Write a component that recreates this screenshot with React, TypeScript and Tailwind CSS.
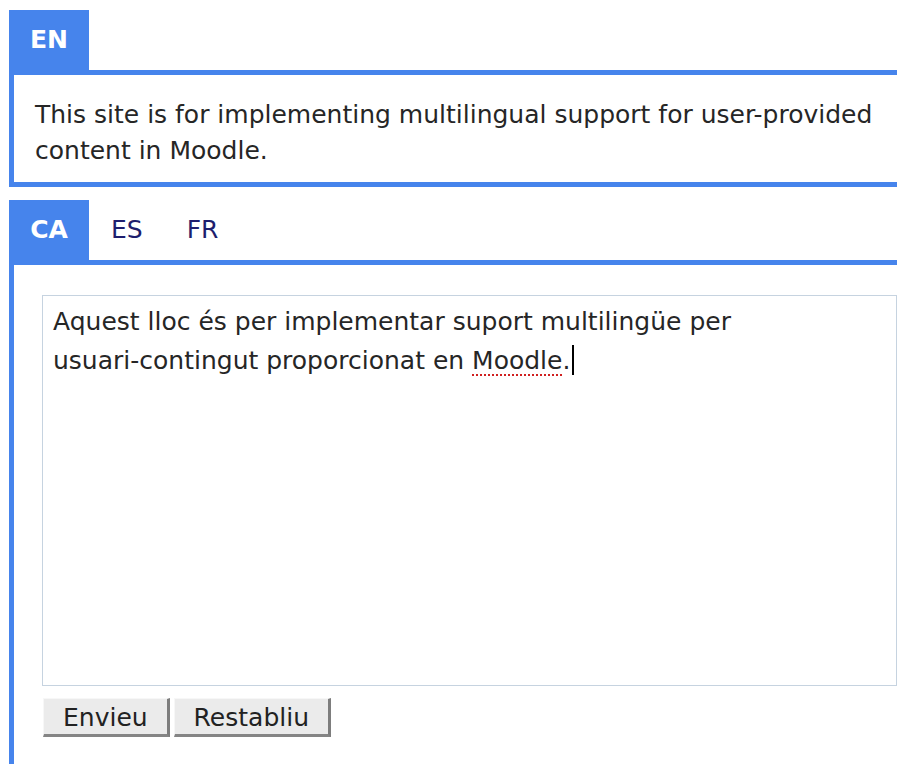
import React from "react";

const font = { fontFamily: '"DejaVu Sans", Verdana, sans-serif' };

function Tab({ label, active }: { label: string; active?: boolean }) {
  if (active) {
    return (
      <div className="flex h-[60px] w-[80px] items-center justify-center bg-[#4684ec] font-bold text-white">
        {label}
      </div>
    );
  }
  return (
    <div className="flex h-[60px] items-center px-[22px] text-[#1e1e6e]">
      {label}
    </div>
  );
}

function FormButton({ label }: { label: string }) {
  return (
    <button
      type="button"
      className="h-[39px] border-t border-l border-t-[#f7f7f7] border-l-[#f7f7f7] border-r-[3px] border-b-[3px] border-r-[#7d7d7d] border-b-[#858585] bg-[#ebebeb] px-[19px] pt-[2px] leading-none text-[#222]"
    >
      {label}
    </button>
  );
}

export default function App() {
  return (
    <div
      className="h-[764px] overflow-hidden bg-white pl-[9px] pt-[10px] text-[25px] leading-[36px] text-[#262626]"
      style={font}
    >
      {/* English block */}
      <div className="flex">
        <Tab label="EN" active />
      </div>
      <div className="w-[900px] border-[5px] border-[#4684ec] bg-white pl-[21px] pt-[22px] pb-[13px]">
        <p>
          This site is for implementing multilingual support for user-provided
          content in Moodle.
        </p>
      </div>

      {/* Translations block */}
      <div className="mt-[13px] flex">
        <Tab label="CA" active />
        <Tab label="ES" />
        <Tab label="FR" />
      </div>
      <div className="h-[600px] w-[900px] border-t-[5px] border-l-[5px] border-[#4684ec] bg-white pt-[30px] pl-[28px]">
        <div className="h-[391px] w-[855px] border border-[#c6d3e0] bg-white pl-[10px] pt-[8px] leading-[35px]">
          <div>Aquest lloc és per implementar suport multilingüe per</div>
          <div>
            usuari-contingut proporcionat en{" "}
            <span className="underline decoration-dotted decoration-[#d02020] decoration-2 underline-offset-[5px]">
              Moodle
            </span>
            .<span className="ml-[2px] inline-block h-[30px] w-[2px] translate-y-[6px] bg-black align-baseline" />
          </div>
        </div>
        <div className="mt-[12px] flex gap-[4px] pl-[1px]">
          <FormButton label="Envieu" />
          <FormButton label="Restabliu" />
        </div>
      </div>
    </div>
  );
}
